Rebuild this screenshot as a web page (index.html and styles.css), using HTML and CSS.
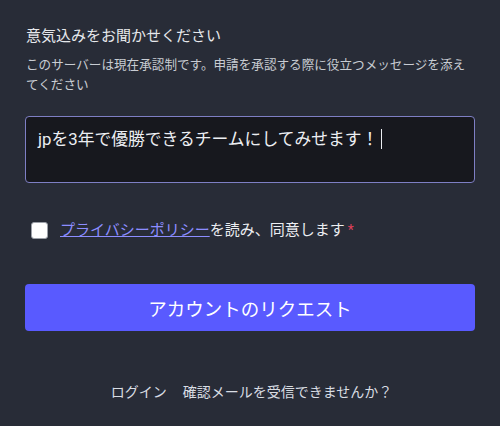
FILE: index.html
```html
<!DOCTYPE html>
<html lang="ja">
<head>
	<meta charset="utf-8" />
	<title>アカウントのリクエスト</title>
	<link rel="stylesheet" href="styles.css">
</head>
<body>

<div class="container">
	<h2 class="label">意気込みをお聞かせください</h2>
	<p class="hint">このサーバーは現在承認制です。申請を承認する際に役立つメッセージを添えてください</p>

	<div class="textarea">jpを3年で優勝できるチームにしてみせます！<span class="caret"></span></div>

	<div class="agreement">
		<span class="checkbox"></span>
		<p class="checkbox-label"><a href="#">プライバシーポリシー</a>を読み、同意します<span class="required">*</span></p>
	</div>

	<button class="submit" type="button">アカウントのリクエスト</button>

	<div class="links">
		<a href="#">ログイン</a>
		<a href="#">確認メールを受信できませんか？</a>
	</div>
</div>

</body>
</html>
```

FILE: styles.css
```css
body {
	margin: 0;
	background: #282c37;
	font-family: Roboto, 'Noto Sans CJK JP', sans-serif;
	color: #e4e7ec;
}
.container {
	padding: 26px 25px 0 25px;
}
.label {
	margin: 0 0 0 1px;
	font-size: 15px;
	line-height: 20px;
	font-weight: normal;
	color: #e6e8ec;
}
.hint {
	margin: 9px 0 0 1px;
	font-size: 12.6px;
	line-height: 19.5px;
	color: #c8ccd3;
}
.textarea {
	margin-top: 22px;
	height: 45px;
	padding: 10px 12px;
	border: 1px solid #7e7fc4;
	border-radius: 4px;
	background: #17181e;
	font-size: 16.8px;
	line-height: 24px;
	color: #eceef2;
}
.caret {
	display: inline-block;
	width: 1px;
	height: 20px;
	margin-left: 3px;
	vertical-align: -4px;
	background: #eceef2;
}
.agreement {
	display: flex;
	align-items: center;
	margin-top: 36px;
	padding-left: 6px;
}
.checkbox {
	width: 15px;
	height: 15px;
	border: 1px solid #9ca0a8;
	border-radius: 3px;
	background: #fff;
}
.checkbox-label {
	margin: 0 0 0 12px;
	font-size: 15px;
	line-height: 22px;
	color: #eceef2;
}
.checkbox-label a {
	color: #8c8dff;
	text-decoration: underline;
}
.required {
	margin-left: 3px;
	color: #df405a;
	font-size: 14px;
}
.submit {
	display: block;
	width: 100%;
	height: 47px;
	margin-top: 43px;
	border: 0;
	border-radius: 4px;
	background: #595aff;
	font-family: inherit;
	font-size: 18.5px;
	color: #fff;
}
.links {
	display: flex;
	justify-content: center;
	gap: 16px;
	margin-top: 51px;
	padding-left: 3px;
	font-size: 14px;
	line-height: 20px;
}
.links a {
	color: #d9dde3;
	text-decoration: none;
}
```
